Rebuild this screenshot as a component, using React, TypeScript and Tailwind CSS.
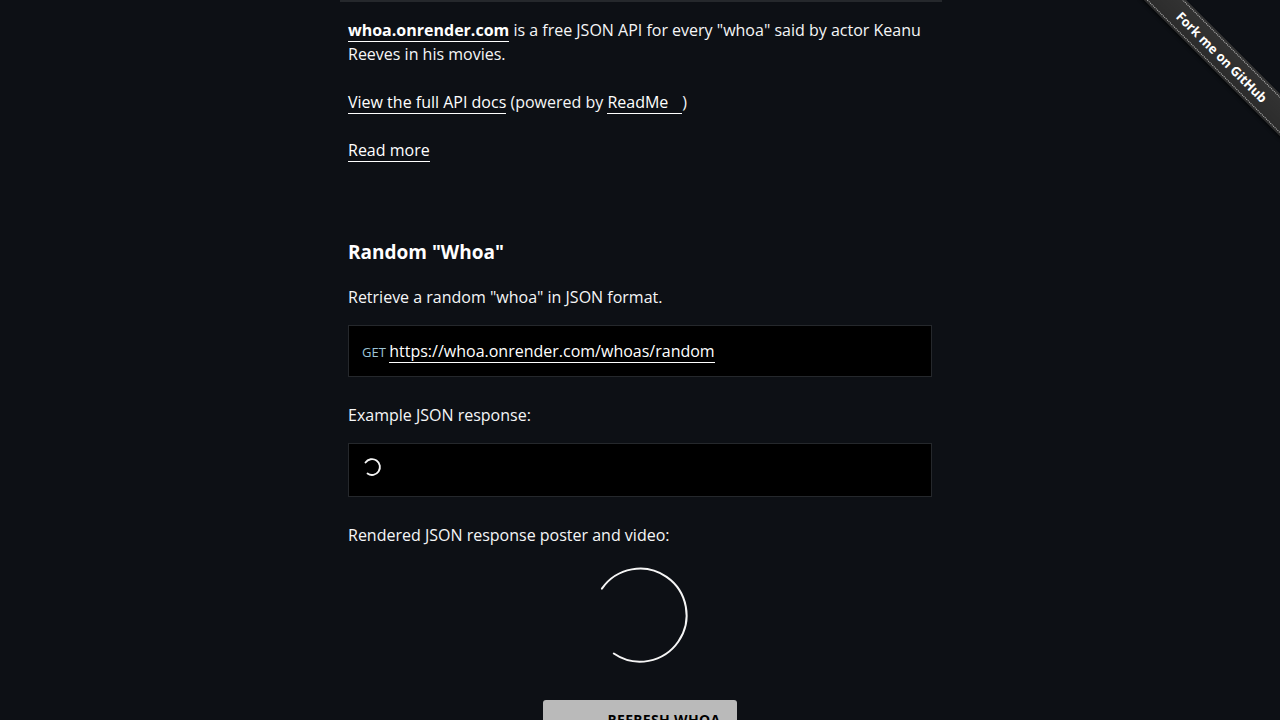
import type { ReactNode } from 'react'

const RANDOM_URL = 'https://whoa.onrender.com/whoas/random'

interface TextLinkProps {
  href: string
  className?: string
  children: ReactNode
}

function TextLink({ href, className = '', children }: TextLinkProps) {
  return (
    <a href={href} className={`border-b border-white text-white ${className}`}>
      {children}
    </a>
  )
}

// Open ring used while a response is loading
function Spinner({ className, strokeWidth }: { className: string; strokeWidth: number }) {
  return (
    <svg
      className={`overflow-visible ${className}`}
      viewBox="0 0 94 94"
      fill="none"
      role="status"
      aria-label="Loading"
    >
      <path
        d="M8.900 20.600A46.500 46.500 0 1 1 20.800 85.500"
        stroke="#f5f5f5"
        strokeWidth={strokeWidth}
        strokeLinecap="round"
      />
    </svg>
  )
}

function ForkRibbon() {
  return (
    <div className="pointer-events-none absolute top-0 right-0 size-40 overflow-hidden">
      <a
        href="https://github.com/"
        className="pointer-events-auto absolute top-[42px] -right-[42px] w-[200px] rotate-45 bg-[#333] bg-linear-to-b from-black/0 to-black/15 py-0.5 text-center text-[13px] font-bold text-white shadow-[0_2px_3px_rgba(0,0,0,0.5)]"
      >
        <span className="block border-y border-dotted border-white/70 leading-6">
          Fork me on GitHub
        </span>
      </a>
    </div>
  )
}

export default function App() {
  return (
    <div className="relative h-screen overflow-hidden bg-[#0d1015] font-['Open_Sans',sans-serif] text-base text-[#f5f6f7] antialiased">
      <ForkRibbon />

      <main className="mx-auto max-w-[600px]">
        <hr className="-mr-0.5 border-t-2 border-[#25282c]" />

        <div className="px-2">
          {/* Intro */}
          <section className="space-y-6 pt-4">
            <p>
              <TextLink href="https://whoa.onrender.com" className="font-bold">
                whoa.onrender.com
              </TextLink>{' '}
              is a free JSON API for every "whoa" said by actor Keanu Reeves in his movies.
            </p>
            <p>
              <TextLink href="#docs">View the full API docs</TextLink> (powered by{' '}
              <TextLink href="https://readme.com" className="pr-3.5">
                ReadMe
              </TextLink>
              )
            </p>
            <p>
              <TextLink href="#about">Read more</TextLink>
            </p>
          </section>

          {/* Random whoa */}
          <section className="pt-[78px]">
            <h3 className="text-[19px] leading-6 font-bold text-white">Random "Whoa"</h3>
            <p className="mt-[21px]">Retrieve a random "whoa" in JSON format.</p>
            <div className="mt-4 border border-[#25282c] bg-black px-[13px] py-[13px]">
              <span className="text-[13px] text-[#9cc3d5]">GET </span>
              <TextLink href={RANDOM_URL}>{RANDOM_URL}</TextLink>
            </div>

            <p className="mt-[26px]">Example JSON response:</p>
            <div className="mt-4 flex h-[54px] items-start border border-[#25282c] bg-black px-[15px] py-[15px]">
              <Spinner className="size-4" strokeWidth={11} />
            </div>

            <p className="mt-[26px]">Rendered JSON response poster and video:</p>
            <Spinner className="mx-auto mt-[21px] size-[94px]" strokeWidth={2} />

            <button
              type="button"
              className="mx-auto mt-[38px] flex items-center rounded-[3px] bg-[#bababa] py-2 pr-4 pl-16 text-sm leading-6 font-bold tracking-wide text-black uppercase"
            >
              Refresh whoa
            </button>
          </section>
        </div>
      </main>
    </div>
  )
}
